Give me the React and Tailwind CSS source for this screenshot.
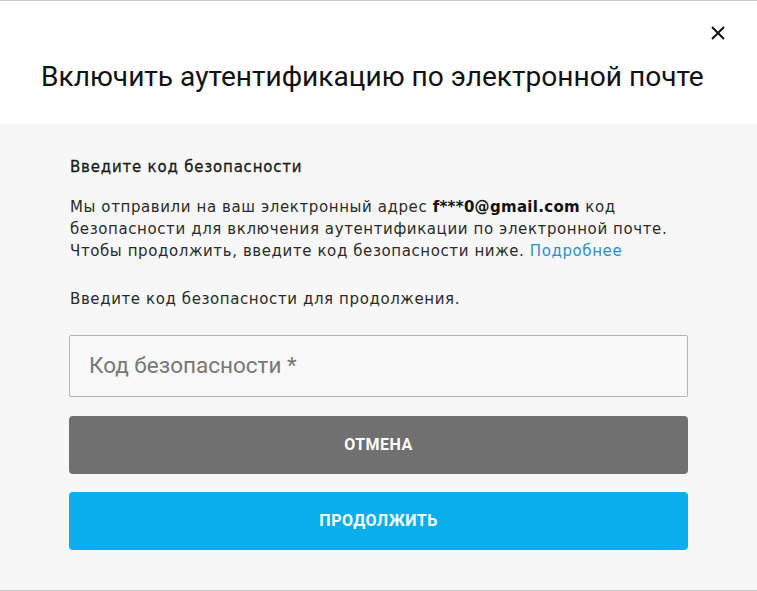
import React from "react";

export default function App() {
  return (
    <div className="w-[757px] h-[591px] flex flex-col bg-[#f7f7f7] border-t border-b border-[#c9c9c9] overflow-hidden" style={{ fontFamily: "Roboto, 'Noto Sans', sans-serif" }}>
      <div className="relative bg-white h-[123px] shrink-0 flex items-end pb-[30px] pl-[41px]">
        <h1 className="text-[28.1px] leading-[34px] text-[#111] whitespace-nowrap">Включить аутентификацию по электронной почте</h1>
        <button className="absolute right-[31px] top-[24px] w-[16px] h-[16px] flex items-center justify-center">
          <svg width="14" height="14" viewBox="0 0 14 14" fill="none" stroke="#111" strokeWidth="2">
            <path d="M1 1 L13 13 M13 1 L1 13" />
          </svg>
        </button>
      </div>
      <div className="flex flex-col px-[69px] pt-[32px]" style={{ fontFamily: "'DejaVu Sans', sans-serif" }}>
        <div className="text-[15px] leading-[22px] tracking-[0.8px] text-[#1a1a1a] pl-[1px] [-webkit-text-stroke:0.3px_#1a1a1a]">Введите код безопасности</div>
        <p className="mt-[18px] text-[15px] leading-[22px] tracking-[0.6px] text-[#2a2a2a] pl-[1px]">
          Мы отправили на ваш электронный адрес <span className="font-bold text-[#111] tracking-[0.3px]">f***0@gmail.com</span> код безопасности для включения аутентификации по электронной почте. Чтобы продолжить, введите код безопасности ниже. <span className="text-[#2e8fc8]">Подробнее</span>
        </p>
        <p className="mt-[26px] text-[15px] leading-[22px] tracking-[0.6px] text-[#2a2a2a] pl-[1px]">Введите код безопасности для продолжения.</p>
        <div className="mt-[25px] h-[62px] border border-[#b5b5b5] rounded-[2px] bg-[#f9f9f9] flex items-center px-[19px]" style={{ fontFamily: "Roboto, sans-serif" }}>
          <span className="text-[22.5px] text-[#777]">Код безопасности *</span>
        </div>
        <button className="mt-[19px] h-[58px] rounded-[4px] bg-[#707070] text-white text-[16px] font-bold tracking-[0.5px]" style={{ fontFamily: "Roboto, sans-serif" }}>ОТМЕНА</button>
        <button className="mt-[18px] h-[58px] rounded-[4px] bg-[#0aaeec] text-white text-[16px] font-bold tracking-[0.5px]" style={{ fontFamily: "Roboto, sans-serif" }}>ПРОДОЛЖИТЬ</button>
      </div>
    </div>
  );
}
